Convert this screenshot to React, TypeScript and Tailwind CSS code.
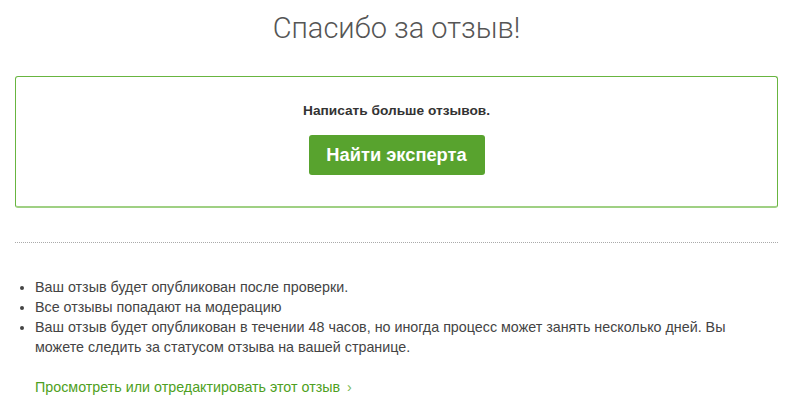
export default function App() {
  const notes = [
    "Ваш отзыв будет опубликован после проверки.",
    "Все отзывы попадают на модерацию",
    "Ваш отзыв будет опубликован в течении 48 часов, но иногда процесс может занять несколько дней. Вы можете следить за статусом отзыва на вашей странице.",
  ];

  return (
    <div className="min-h-[410px] bg-white px-[15px] pr-[16px] font-['Liberation_Sans',Arial,sans-serif]">
      <h1 className="pt-[10px] text-center font-['Roboto',sans-serif] text-[29px] font-light leading-[36px] text-[#555]">
        Спасибо за отзыв!
      </h1>

      {/* CTA box */}
      <div className="mt-[30px] flex flex-col items-center rounded-[3px] border border-[#68b540] border-b-[#9fd083] border-b-2 pt-[25px] pb-[31px]">
        <div className="text-[13.7px] font-bold leading-[18px] text-[#333]">Написать больше отзывов.</div>
        <button className="mt-[15px] h-[40px] w-[176px] rounded-[3px] bg-[#58a32e] text-[18.3px] font-bold text-white">
          Найти эксперта
        </button>
      </div>

      <div className="mt-[34px] border-t border-dotted border-[#aaa]" />

      <ul className="mt-[34px] max-w-[715px] list-disc pl-[20px] text-[14.3px] leading-[20px] text-[#444]">
        {notes.map((n, i) => (
          <li key={i}>{n}</li>
        ))}
      </ul>

      <a href="#" className="mt-[20px] ml-[20px] block text-[14.3px] leading-[20px] text-[#4e9f22]">
        Просмотреть или отредактировать этот отзыв <span className="ml-[3px] text-[#7aba57]">›</span>
      </a>
    </div>
  );
}
